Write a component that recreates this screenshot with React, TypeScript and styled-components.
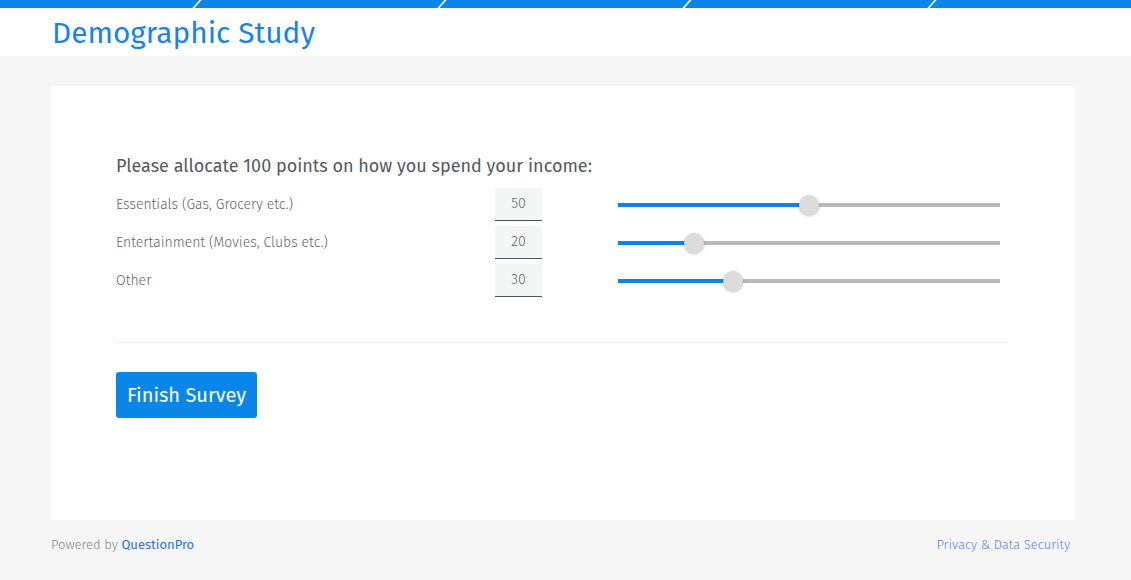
import React from "react";
import styled, { createGlobalStyle } from "styled-components";

const Global = createGlobalStyle`
  html, body { margin: 0; padding: 0; }
  body {
    background: #f6f6f6;
    font-family: "Fira Sans", "Open Sans", "Noto Sans", sans-serif;
    width: 1131px;
    height: 580px;
    overflow: hidden;
  }
`;

const Header = styled.header`
  background: #fff;
  height: 56px;
  display: flex;
  flex-direction: column;
`;

const TopBar = styled.div`
  height: 8px;
  background: #0a86e8;
  position: relative;
  overflow: hidden;
`;

const Slashes = styled.svg`
  position: absolute;
  left: 0;
  top: 0;
`;

const TitleRow = styled.div`
  flex: 1;
  display: flex;
  align-items: center;
  padding-left: 52px;
`;

const Title = styled.h1`
  margin: 0;
  font-weight: 400;
  font-size: 29.8px;
  color: #1a84e6;
  line-height: 1;
  padding-top: 4px;
`;

const Main = styled.main`
  padding: 30px 0 0 51px;
`;

const Card = styled.section`
  width: 1024px;
  height: 434px;
  box-sizing: border-box;
  background: #fff;
  padding: 69px 67px 0 65px;
`;

const Question = styled.div`
  font-size: 18px;
  color: #555a5f;
  line-height: 22px;
  margin-bottom: 11px;
`;

const Rows = styled.div`
  display: flex;
  flex-direction: column;
  gap: 5px;
`;

const Row = styled.div`
  display: grid;
  grid-template-columns: 379px 47px 76px 382px;
  align-items: center;
  height: 33px;
`;

const Label = styled.div`
  font-size: 14px;
  font-weight: 300;
  color: #5f656b;
  margin-top: -1px;
`;

const NumBox = styled.div`
  height: 33px;
  box-sizing: border-box;
  background: #f4f6f6;
  border-bottom: 1px solid #4a5560;
  display: flex;
  align-items: center;
  justify-content: center;
  font-size: 14px;
  font-weight: 300;
  color: #5f656b;
  padding-bottom: 1px;
`;

const Spacer = styled.div``;

const Track = styled.div`
  position: relative;
  height: 4px;
  background: #bababa;
  margin-top: 1px;
`;

const Fill = styled.div`
  position: absolute;
  left: 0;
  top: 0;
  bottom: 0;
  background: #0a86e8;
`;

const Thumb = styled.div`
  position: absolute;
  top: 50%;
  width: 20px;
  height: 20px;
  border-radius: 50%;
  background: #dcdcdc;
  box-shadow: 0 1px 3px rgba(0, 0, 0, 0.25);
  transform: translate(-50%, -50%);
`;

const Divider = styled.hr`
  border: 0;
  border-top: 1px solid #eceeef;
  margin: 45px 0 29px;
`;

const Button = styled.button`
  width: 141px;
  height: 46px;
  border: 0;
  border-radius: 3px;
  background: #0a86e8;
  color: #fff;
  font-family: inherit;
  font-size: 20px;
  padding: 0;
  cursor: pointer;
`;

const Footer = styled.footer`
  width: 1019px;
  margin-left: 51px;
  display: flex;
  justify-content: space-between;
  align-items: center;
  height: 48px;
  font-size: 13px;
  font-weight: 300;
`;

const Muted = styled.span`
  color: #7f8489;
`;

const Link = styled.a<{ $light?: boolean }>`
  color: ${(p) => (p.$light ? "#5b84e6" : "#2a73e0")};
  font-weight: ${(p) => (p.$light ? 300 : 400)};
  text-decoration: none;
`;

const items = [
  { label: "Essentials (Gas, Grocery etc.)", value: 50 },
  { label: "Entertainment (Movies, Clubs etc.)", value: 20 },
  { label: "Other", value: 30 },
];

export default function App() {
  return (
    <>
      <Global />
      <Header>
        <TopBar>
          <Slashes width="1131" height="8" viewBox="0 0 1131 8">
            {[193, 438, 683, 928].map((x) => (
              <line key={x} x1={x} y1={8.5} x2={x + 8} y2={-0.5} stroke="#fff" strokeWidth={1.6} />
            ))}
          </Slashes>
        </TopBar>
        <TitleRow>
          <Title>Demographic Study</Title>
        </TitleRow>
      </Header>
      <Main>
        <Card>
          <Question>Please allocate 100 points on how you spend your income:</Question>
          <Rows>
            {items.map((it) => (
              <Row key={it.label}>
                <Label>{it.label}</Label>
                <NumBox>{it.value}</NumBox>
                <Spacer />
                <Track>
                  <Fill style={{ width: `${it.value}%` }} />
                  <Thumb style={{ left: `${it.value}%` }} />
                </Track>
              </Row>
            ))}
          </Rows>
          <Divider />
          <Button>Finish Survey</Button>
        </Card>
      </Main>
      <Footer>
        <span>
          <Muted>Powered by </Muted>
          <Link href="#">QuestionPro</Link>
        </span>
        <Link href="#" $light>
          Privacy &amp; Data Security
        </Link>
      </Footer>
    </>
  );
}
